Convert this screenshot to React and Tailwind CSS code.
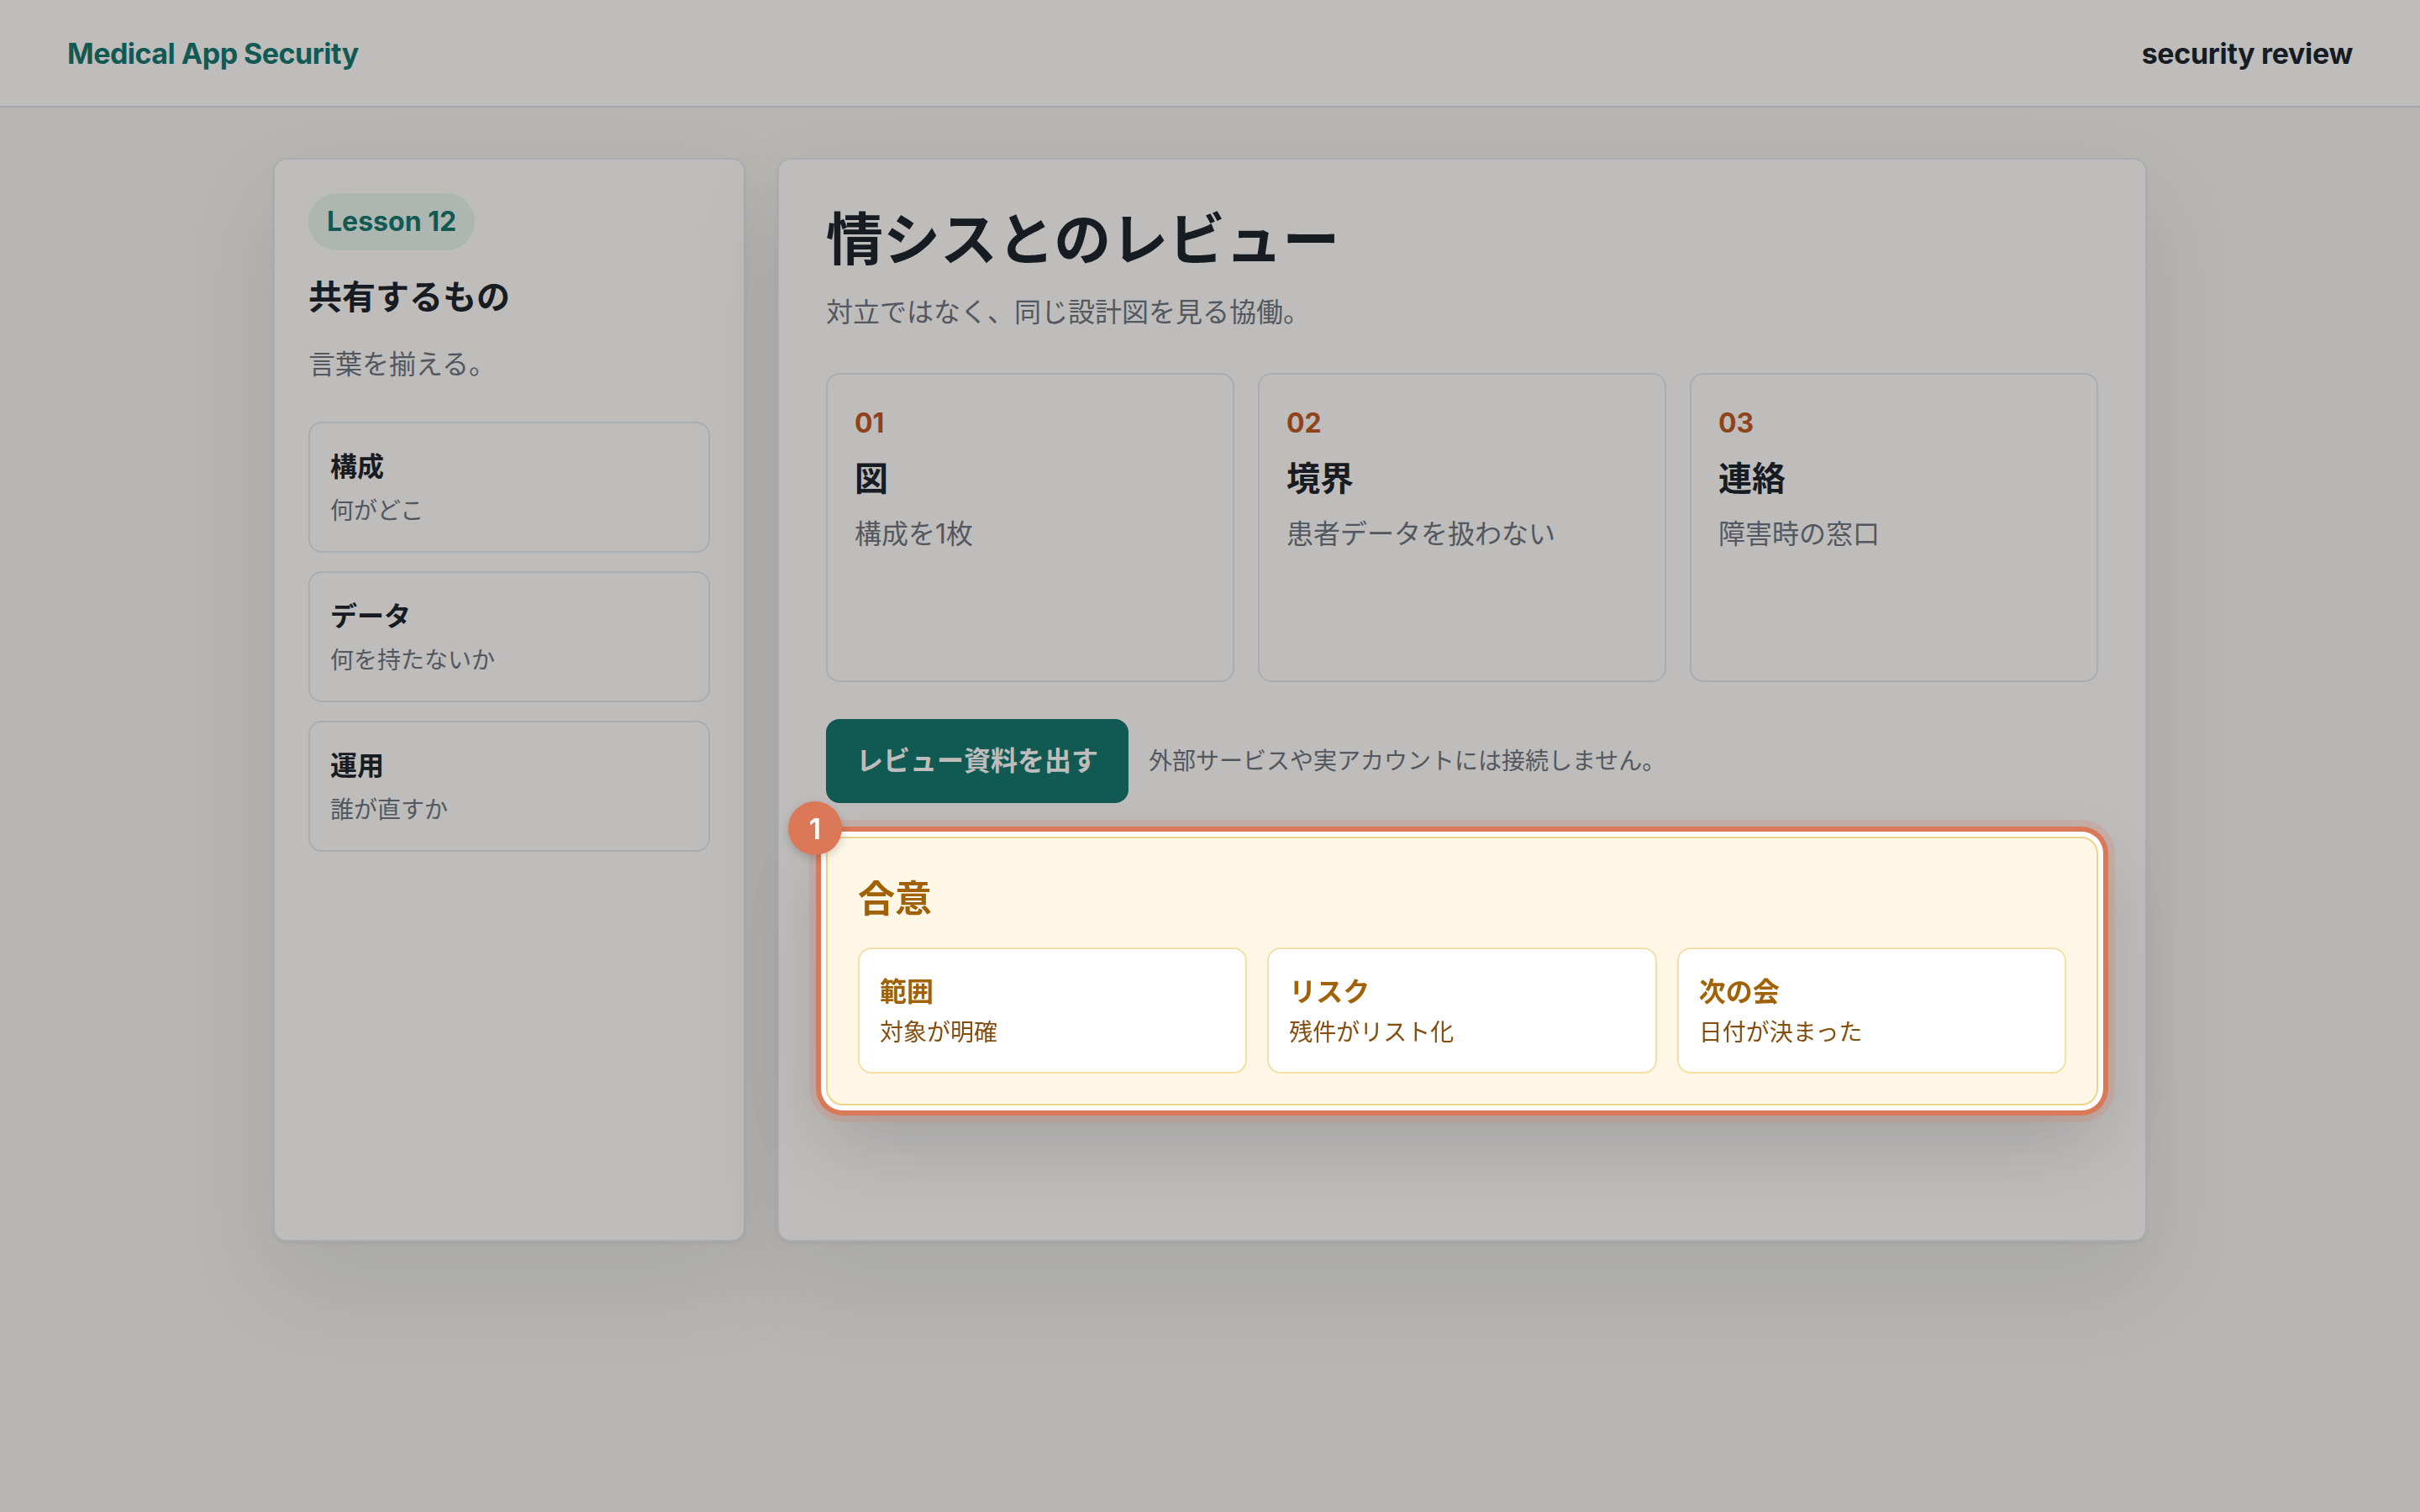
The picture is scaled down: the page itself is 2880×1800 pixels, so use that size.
const sharedItems = [
  { title: '構成', desc: '何がどこ' },
  { title: 'データ', desc: '何を持たないか' },
  { title: '運用', desc: '誰が直すか' },
];

const steps = [
  { no: '01', title: '図', desc: '構成を1枚' },
  { no: '02', title: '境界', desc: '患者データを扱わない' },
  { no: '03', title: '連絡', desc: '障害時の窓口' },
];

const agreements = [
  { title: '範囲', desc: '対象が明確' },
  { title: 'リスク', desc: '残件がリスト化' },
  { title: '次の会', desc: '日付が決まった' },
];

const App = () => (
  <div className="min-h-screen bg-[#f5f5f2] font-[Inter,'Noto_Sans_CJK_JP',sans-serif] text-[#17202a]">
    {/* Top bar */}
    <header className="h-[128px] border-b-2 border-[#dfe4ea] bg-white flex items-center justify-between px-20">
      <span className="text-[34px] font-bold tracking-[-0.015em] text-[#0f766e]">Medical App Security</span>
      <span className="text-[34px] font-bold tracking-[-0.01em]">security review</span>
    </header>

    <main className="mx-auto mt-[60px] grid w-[2230px] min-h-[1290px] grid-cols-[562px_1fr] gap-[38px]">
      {/* Lesson sidebar */}
      <aside className="rounded-2xl border-2 border-[#e2e8f0] bg-white p-10 shadow-[0_2px_4px_rgba(15,23,42,0.06),0_48px_120px_rgba(15,23,42,0.09)] flex flex-col">
        <span className="self-start inline-flex h-[68px] items-center rounded-full bg-[#e9f5f1] px-[22px] text-[32px] font-bold text-[#0f766e]">
          Lesson 12
        </span>
        <h2 className="mt-[28px] text-[40px] font-bold leading-[56px]">共有するもの</h2>
        <p className="mt-[28px] text-[32px] leading-[48px] text-[#6b7480]">言葉を揃える。</p>
        <div className="mt-[44px] flex flex-col gap-[22px]">
          {sharedItems.map(item => (
            <div key={item.title} className="rounded-2xl border-2 border-[#e2e8f0] px-6 py-[28px]">
              <div className="text-[32px] font-bold leading-[48px]">{item.title}</div>
              <div className="mt-2 text-[28px] leading-[40px] text-[#6b7480]">{item.desc}</div>
            </div>
          ))}
        </div>
      </aside>

      {/* Main lesson */}
      <section className="rounded-2xl border-2 border-[#e2e8f0] bg-white p-14 shadow-[0_2px_4px_rgba(15,23,42,0.06),0_48px_120px_rgba(15,23,42,0.09)]">
        <h1 className="text-[68px] font-bold leading-[1.15]">情シスとのレビュー</h1>
        <p className="mt-6 text-[32px] leading-[48px] text-[#6b7480]">対立ではなく、同じ設計図を見る協働。</p>

        <div className="mt-12 grid grid-cols-3 gap-7">
          {steps.map(step => (
            <div key={step.no} className="min-h-[368px] rounded-2xl border-2 border-[#e2e8f0] px-8 pt-[34px]">
              <div className="text-[32px] font-bold leading-[48px] text-[#c0561f]">{step.no}</div>
              <div className="mt-[14px] text-[40px] font-bold leading-[56px]">{step.title}</div>
              <div className="mt-[14px] text-[32px] leading-[48px] text-[#6b7480]">{step.desc}</div>
            </div>
          ))}
        </div>

        <div className="mt-[44px] flex items-center gap-6">
          <button className="rounded-2xl bg-[#0f766e] px-[36px] py-[26px] text-[32px] font-bold leading-[48px] text-white">
            レビュー資料を出す
          </button>
          <span className="text-[28px] text-[#6b7480]">外部サービスや実アカウントには接続しません。</span>
        </div>

        {/* Highlighted result */}
        <div className="relative z-20 mt-10 rounded-[20px] border-2 border-[#f1d28d] bg-[#fff7e6] p-[36px] ring-[6px] ring-[#db7858] ring-offset-[6px] ring-offset-white shadow-[0_0_0_20px_rgba(219,120,88,0.22),0_40px_96px_rgba(0,0,0,0.16)]">
          <span className="absolute -left-[47px] -top-[44px] flex h-16 w-16 items-center justify-center rounded-full bg-[#db7858] text-[34px] font-semibold text-white shadow-[0_4px_12px_rgba(0,0,0,0.18)]">
            1
          </span>
          <h3 className="text-[44px] font-bold leading-[72px] text-[#a16207]">合意</h3>
          <div className="mt-[22px] grid grid-cols-3 gap-6">
            {agreements.map(a => (
              <div key={a.title} className="rounded-2xl border-2 border-[#f6dfa6] bg-white px-6 py-[27px]">
                <div className="text-[32px] font-bold leading-[48px] text-[#a16207]">{a.title}</div>
                <div className="mt-[4px] text-[28px] leading-[40px] text-[#854d0e]">{a.desc}</div>
              </div>
            ))}
          </div>
        </div>
      </section>
    </main>

    {/* Dimming layer behind the highlight */}
    <div className="pointer-events-none fixed inset-0 z-10 bg-[rgba(20,18,14,0.28)]" />
  </div>
);

export default App;
